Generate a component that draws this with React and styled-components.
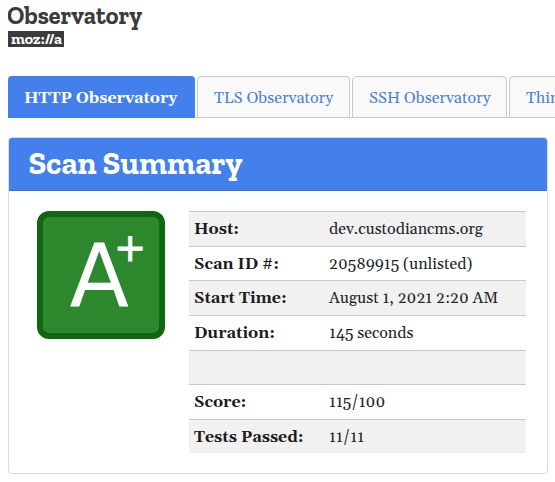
import React from "react";
import styled, { createGlobalStyle } from "styled-components";

const GlobalStyle = createGlobalStyle`
  * { box-sizing: border-box; }
  html, body { margin: 0; background: #fff; overflow: hidden; }
  body {
    font-family: Gelasio, Georgia, "Liberation Serif", serif;
    font-size: 16px;
    font-variant-numeric: oldstyle-nums;
    color: #212529;
  }
`;

const Page = styled.div`
  width: 555px;
  height: 482px;
  overflow: hidden;
  padding: 0 0 0 8px;
`;
const Brand = styled.header`
  height: 76px;
  svg { display: block; }
`;
const Tabs = styled.nav`
  display: flex;
  gap: 2px;
  height: 42px;
  width: 547px;
  overflow: hidden;
  background: linear-gradient(#ccc, #ccc) bottom / 100% 1px no-repeat;
`;
const Tab = styled.a`
  flex: 0 0 ${(p) => p.$width}px;
  height: 42px;
  padding-left: 16px;
  line-height: ${(p) => (p.$active ? 44 : 42)}px;
  white-space: nowrap;
  border: ${(p) => (p.$active ? "0" : "1px solid #c8c8c8")};
  border-radius: 4px 4px 0 0;
  background: ${(p) => (p.$active ? "#4480eb" : "#f9f9f9")};
  color: ${(p) => (p.$active ? "#fff" : "#4a82dc")};
  font-weight: ${(p) => (p.$active ? 700 : 400)};
`;
const Panel = styled.section`
  width: 540px;
  height: 337px;
  margin-top: 19px;
  border: 1px solid #dcdcdc;
  border-radius: 4px;
  overflow: hidden;
`;
const PanelHeader = styled.h2`
  margin: 0;
  height: 53px;
  padding-left: 19.5px;
  background: #4480eb;
  border-bottom: 1px solid #3d73cf;
  color: #fff;
  font: 700 32px/51px "Zilla Slab", "DejaVu Serif", serif;
`;
const PanelBody = styled.div`
  display: flex;
  gap: 24px;
  padding: 20px 0 0 28px;
`;
const Grade = styled.svg`
  display: block;
  flex: none;
`;
const Table = styled.dl`
  margin: 0;
  width: 337px;
`;
const Row = styled.div`
  display: grid;
  grid-template-columns: 135px 1fr;
  height: ${(p) => p.$height}px;
  padding-left: 5px;
  border-top: 1px solid #c9c9c9;
  background: ${(p) => (p.$shaded ? "#f1f1f1" : "#fff")};
  line-height: 35px;
  white-space: nowrap;
`;
const Label = styled.dt`
  font-weight: 700;
  color: #1c1c1c;
`;
const Value = styled.dd`
  margin: 0;
`;

const tabs = [
  { label: "HTTP Observatory", width: 187, active: true },
  { label: "TLS Observatory", width: 153 },
  { label: "SSH Observatory", width: 155 },
  { label: "Thin", width: 170 },
];
const rows = [
  { label: "Host:", value: "dev.custodiancms.org", height: 35 },
  { label: "Scan ID #:", value: "20589915 (unlisted)", height: 34 },
  { label: "Start Time:", value: "August 1, 2021 2:20 AM", height: 35 },
  { label: "Duration:", value: "145 seconds", height: 35 },
  { label: "", value: "", height: 34 },
  { label: "Score:", value: "115/100", height: 35 },
  { label: "Tests Passed:", value: "11/11", height: 34 },
];

const slab = '"Zilla Slab", "DejaVu Serif", serif';

export default function App() {
  return (
    <>
      <GlobalStyle />
      <Page>
        <Brand>
          <svg width="160" height="50" fontFamily={slab} fontWeight="700">
            <text x="-1" y="24" fontSize="25" fill="#3b3b3b" textLength="135" lengthAdjust="spacingAndGlyphs">Observatory</text>
            <rect x="0" y="31" width="56" height="16" fill="#3b3b3b" />
            <text x="3" y="43.500" fontSize="16" fill="#fff" textLength="51" lengthAdjust="spacingAndGlyphs">moz://a</text>
          </svg>
        </Brand>
        <Tabs>
          {tabs.map((t) => (
            <Tab key={t.label} $active={t.active} $width={t.width}>{t.label}</Tab>
          ))}
        </Tabs>
        <Panel>
          <PanelHeader>Scan Summary</PanelHeader>
          <PanelBody>
            <Grade width="128" height="128">
              <rect x="3" y="3" width="122" height="122" rx="9" fill="#2d882d" stroke="#116611" strokeWidth="6" />
              <g fill="#fff" fontFamily='"DejaVu Sans", sans-serif'>
                <text x="32.500" y="95" fontSize="87">A</text>
                <text x="77" y="50" fontSize="38.500" stroke="#fff" strokeWidth="0.800">+</text>
              </g>
            </Grade>
            <Table>
              {rows.map((r, i) => (
                <Row key={i} $height={r.height} $shaded={i % 2 === 0}>
                  <Label>{r.label}</Label>
                  <Value>{r.value}</Value>
                </Row>
              ))}
            </Table>
          </PanelBody>
        </Panel>
      </Page>
    </>
  );
}
